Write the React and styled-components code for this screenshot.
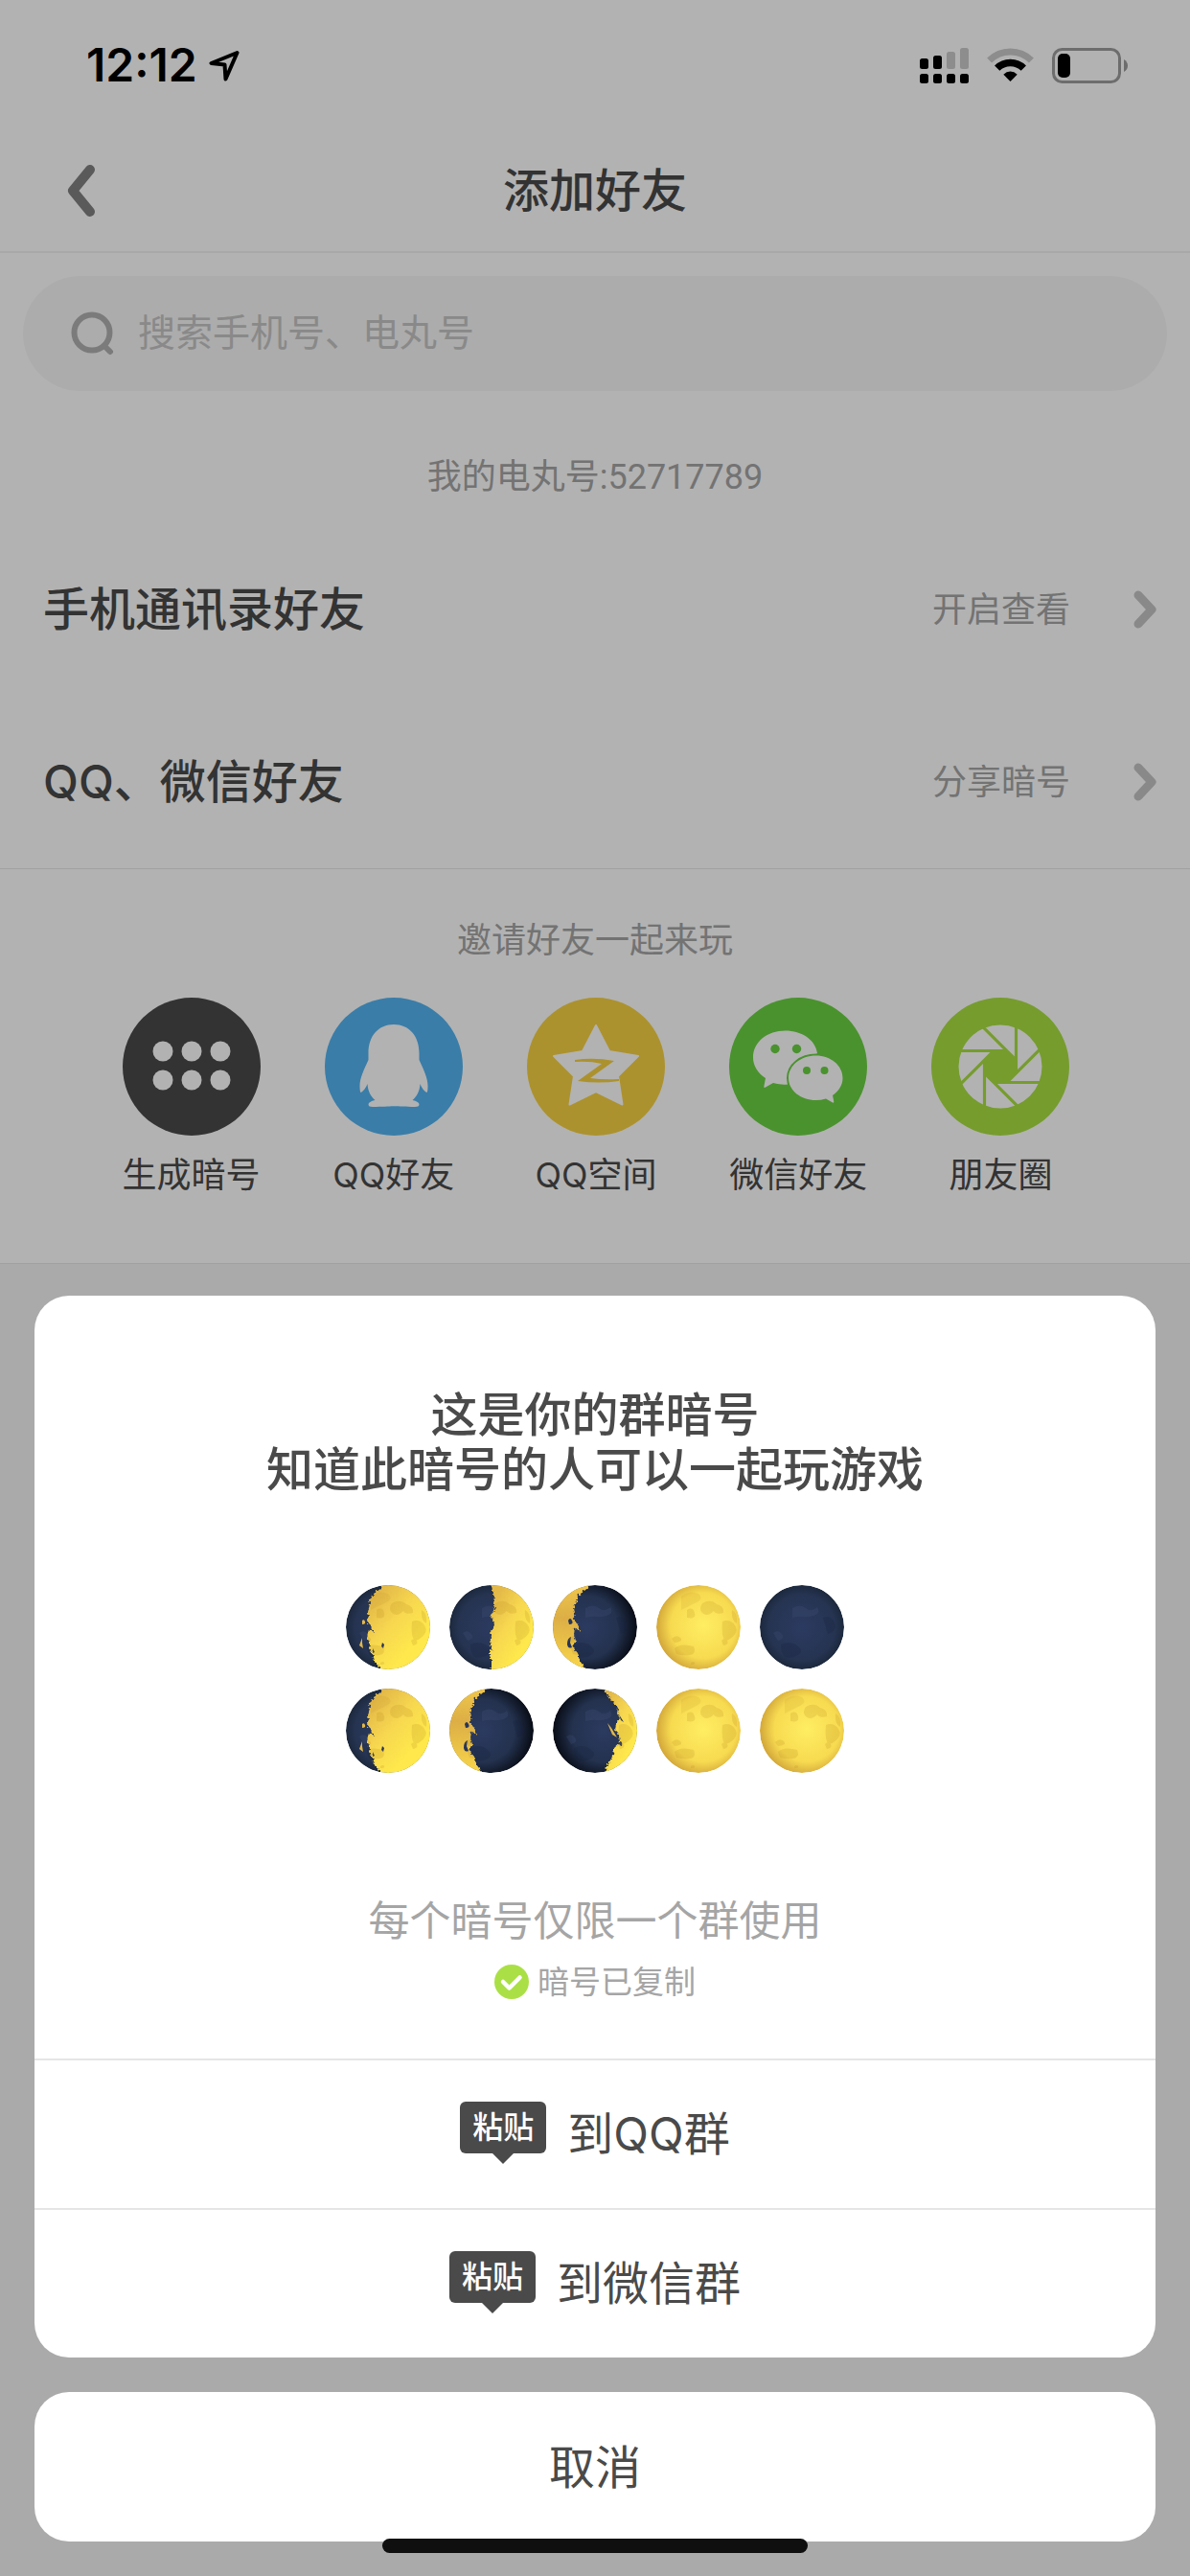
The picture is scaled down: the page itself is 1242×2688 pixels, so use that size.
import React from "react";
import styled, { createGlobalStyle } from "styled-components";

const color = {
  ink: "#4a4a4a",
  muted: "#a5a5a5",
  faint: "#c5c5c5",
  line: "#e5e5e5",
};

const GlobalStyle = createGlobalStyle`
  *, *::before, *::after { box-sizing: border-box; }
  body {
    margin: 0;
    background: #f4f4f4;
    color: ${color.ink};
    font-family: Inter, "Noto Sans CJK SC", sans-serif;
    font-size: 36px;
    line-height: 48px;
  }
  button, input { font: inherit; color: inherit; }
  button { border: 0; padding: 0; background: none; cursor: pointer; }
  h1, h2, p, ul { margin: 0; padding: 0; font-weight: 400; }
  ul { list-style: none; }
  svg { display: block; flex: none; }
`;

const Page = styled.div`
  position: relative;
  min-height: 100vh;
`;

const Screen = styled.main`
  background: #fff;
  border-bottom: 1px solid ${color.line};
`;

const StatusBar = styled.div`
  display: flex;
  align-items: center;
  justify-content: space-between;
  height: 136px;
  padding: 0 65px 0 90px;
  color: #000;
`;

const StatusGroup = styled.div`
  display: flex;
  align-items: center;
  gap: ${(p) => p.$gap}px;
`;

const Clock = styled.time`
  font-size: 48px;
  font-weight: 600;
`;

const NavBar = styled.header`
  display: grid;
  grid-template-columns: 1fr auto 1fr;
  align-items: center;
  height: 128px;
  padding: 0 70px;
  border-bottom: 2px solid #f1f1f1;
`;

const BackButton = styled.button`
  justify-self: start;
`;

const Title = styled.h1`
  font-size: 48px;
  font-weight: 500;
`;

const SearchForm = styled.form`
  padding: 24px;
`;

const SearchBox = styled.label`
  display: flex;
  align-items: center;
  gap: 24px;
  height: 120px;
  padding: 0 50px;
  border-radius: 60px;
  background: #f7f7f7;
`;

const SearchInput = styled.input`
  flex: 1;
  min-width: 0;
  padding: 0 0 2px;
  border: 0;
  outline: 0;
  background: none;
  font-size: 39px;
  &::placeholder { color: ${color.faint}; opacity: 1; }
`;

const MyId = styled.p`
  padding: 42px 0 24px;
  color: ${color.muted};
  font-family: Roboto, "Noto Sans CJK SC", sans-serif;
  text-align: center;
`;

const FriendRow = styled.button`
  display: flex;
  align-items: center;
  width: 100%;
  height: 180px;
  padding: 0 33px 0 45px;
  text-align: left;
`;

const RowTitle = styled.span`
  flex: 1;
  font-size: 48px;
  font-weight: 500;
`;

const RowAction = styled.span`
  margin-right: 66px;
  color: ${color.muted};
`;

const Invite = styled.section`
  padding: 50px 0 68px;
  border-top: 1px solid ${color.line};
`;

const InviteTitle = styled.h2`
  margin-bottom: 36px;
  color: ${color.muted};
  font-size: 36px;
  text-align: center;
`;

const ShareGrid = styled.ul`
  display: grid;
  grid-template-columns: repeat(5, 1fr);
  padding: 0 92px 0 94px;
`;

const ShareButton = styled.button`
  display: flex;
  flex-direction: column;
  align-items: center;
  gap: 17px;
  width: 100%;
`;

const Backdrop = styled.div`
  position: absolute;
  inset: 0;
  background: rgba(0, 0, 0, 0.3);
`;

const Sheet = styled.div`
  position: absolute;
  left: 0;
  right: 0;
  bottom: 0;
  display: flex;
  flex-direction: column;
  gap: 36px;
  padding: 36px;
`;

const Card = styled.section`
  overflow: hidden;
  border-radius: 36px;
  background: #fff;
`;

const CardBody = styled.div`
  display: flex;
  flex-direction: column;
  align-items: center;
  padding: 96px 36px 56px;
`;

const CardTitle = styled.h2`
  font-size: 49px;
  font-weight: 500;
  line-height: 57px;
  text-align: center;
`;

const CodeGrid = styled.ul`
  display: grid;
  grid-template-columns: repeat(5, 88px);
  gap: 20px;
  margin: 92px 0 130px;
`;

const Hint = styled.p`
  color: ${color.muted};
  font-size: 43px;
`;

const Copied = styled.p`
  display: flex;
  align-items: center;
  gap: 9px;
  margin-top: 16px;
  color: ${color.muted};
  font-size: 33px;
`;

const SheetButton = styled.button`
  display: flex;
  align-items: center;
  justify-content: center;
  gap: 22px;
  width: 100%;
  height: 156px;
  border-top: 2px solid ${(p) => (p.$plain ? "transparent" : color.line)};
  font-size: 48px;
`;

const PasteTag = styled.span`
  position: relative;
  width: 90px;
  margin-bottom: 14px;
  border-radius: 6px;
  background: ${color.ink};
  color: #fff;
  font-size: 32px;
  font-weight: 500;
  line-height: 54px;
  text-align: center;
  &::after {
    content: "";
    position: absolute;
    top: 100%;
    left: 50%;
    margin-left: -11px;
    border: 11px solid transparent;
    border-top-color: ${color.ink};
    border-bottom: 0;
  }
`;

const HomeIndicator = styled.div`
  position: absolute;
  bottom: 24px;
  left: 50%;
  width: 444px;
  height: 15px;
  margin-left: -222px;
  border-radius: 8px;
  background: #0f0f0f;
`;

const HiddenDefs = styled.div`
  height: 0;
  overflow: hidden;
`;

const LocationIcon = () => (
  <svg width="32" height="33" viewBox="0 0 32 33" fill="none" stroke="#000" strokeWidth="4" strokeLinejoin="round" aria-hidden="true">
    <path d="M29.5 3 2.5 14 16.5 15.5 17.5 30.5Z" />
  </svg>
);

const SignalIcon = () => (
  <svg width="51" height="37" viewBox="0 0 51 37" aria-hidden="true">
    <rect x="0" y="11" width="9" height="11" rx="2.5" />
    <rect x="14" y="8" width="9" height="14" rx="2.5" />
    <rect x="28" y="4" width="9" height="18" rx="2.5" fill="#cbcbcb" />
    <rect x="42" y="0" width="9" height="22" rx="2.5" fill="#cbcbcb" />
    {[0, 14, 28, 42].map((x) => (
      <rect key={x} x={x} y="27" width="9" height="10" rx="2.5" />
    ))}
  </svg>
);

const WifiIcon = () => (
  <svg width="49" height="36" viewBox="0 0 49 36" fill="none" aria-hidden="true">
    <path d="M2.6 13.1a31 31 0 0 1 43.8 0" stroke="#cbcbcb" strokeWidth="7" />
    <path d="M10.7 21.2a19.5 19.5 0 0 1 27.6 0" stroke="#000" strokeWidth="7.5" />
    <path d="M24.5 35 17.3 27.8Q20.5 24.5 24.5 24.5T31.7 27.8Z" fill="#000" />
  </svg>
);

const BatteryIcon = () => (
  <svg width="79" height="37" viewBox="0 0 79 37" aria-hidden="true">
    <rect x="1.5" y="1.5" width="69" height="34" rx="9" fill="none" stroke="#9c9c9c" strokeWidth="3" />
    <rect x="6" y="6" width="13" height="25" rx="5" />
    <path d="M75 12q4 2.500 4 6.500t-4 6.500Z" fill="#9c9c9c" />
  </svg>
);

const BackIcon = () => (
  <svg width="30" height="56" viewBox="0 0 30 56" fill="none" stroke="#818181" strokeWidth="10" strokeLinecap="round" strokeLinejoin="round" aria-hidden="true">
    <path d="M24 6 6 28 24 50" />
  </svg>
);

const ForwardIcon = () => (
  <svg width="26" height="40" viewBox="0 0 26 40" fill="none" stroke={color.faint} strokeWidth="9" strokeLinecap="round" strokeLinejoin="round" aria-hidden="true">
    <path d="M5 5 19 20 5 35" />
  </svg>
);

const SearchIcon = () => (
  <svg width="46" height="46" viewBox="0 0 46 46" fill="none" stroke="#b1b1b1" strokeWidth="6" aria-hidden="true">
    <circle cx="22" cy="22" r="18.5" />
    <path d="M35 36 41 42" strokeLinecap="round" />
  </svg>
);

const CheckIcon = () => (
  <svg width="36" height="36" viewBox="0 0 36 36" fill="none" aria-hidden="true">
    <circle cx="18" cy="18" r="18" fill="#aae045" />
    <path d="M9 18 15.5 24.5 26.5 13.5" stroke="#fff" strokeWidth="4.5" strokeLinecap="round" strokeLinejoin="round" />
  </svg>
);

const CodeGlyph = () => (
  <g fill="#fff">
    {[56, 86].map((y) => [42, 72, 102].map((x) => <circle key={x + "-" + y} cx={x} cy={y} r="10.5" />))}
  </g>
);

const QQGlyph = () => (
  <path
    fill="#fff"
    d="M72 28C56 28 45.500 40 45.500 58V65C41 75 36.500 84 36.500 92Q36.500 98 37.500 99C40 98 43 94 44.500 90C45 98 48 103 52.500 107C48 108 45.500 109.500 45.500 111.500Q45.500 114 50 114C60 114 66 113.500 72 113.300C78 113.500 84 114 94 114Q98.500 114 98.500 111.500C98.500 109.500 96 108 91.500 107C96 103 99 98 99.500 90C101 94 104 98 106.500 99Q107.500 98 107.500 92C107.500 84 103 75 98.500 65V58C98.500 40 88 28 72 28Z"
  />
);

const QzoneGlyph = () => (
  <g>
    <path
      d="M72 29 86 56 116 61 95 82 99.500 111.500 72 98 44.500 111.500 49 82 28 61 58 56Z"
      fill="#fff"
      stroke="#fff"
      strokeWidth="2"
      strokeLinejoin="round"
    />
    <path d="M50 65Q70 62 91 66L66 84Q80 86 96 85V87Q75 90 53 87L78 69Q66 66 50 67Z" fill="#f7d143" />
  </g>
);

const WechatGlyph = () => (
  <g fill="#fff">
    <path d="M58.500 34.500C40 34.500 25 46 25 62.500C25 71 30 79 38 84L36.300 93Q36.500 94.500 38 93.500L46 89C52 90.500 56 91 61 90.500L92 58C90 44 76 34.500 58.500 34.500Z" />
    <path
      d="M90.500 60.500C75 60.500 62 70.500 62 84C62 97 75 107 90.500 107Q96 107 101 105.500L108 109.500Q109.500 110 109.300 108.500L108 102C114.500 97.500 118.500 91 118.500 84C118.500 70.500 106 60.500 90.500 60.500Z"
      stroke="#6bd143"
      strokeWidth="4"
      paintOrder="stroke"
    />
    <g fill="#6bd143">
      <circle cx="48" cy="53.5" r="4.7" />
      <circle cx="70.5" cy="53.5" r="4.7" />
      <circle cx="81" cy="76" r="4" />
      <circle cx="99.5" cy="76" r="4" />
    </g>
  </g>
);

const MomentsGlyph = () => (
  <g>
    <circle cx="72" cy="72" r="43.5" fill="#fff" />
    <path d="M65 55H79L89 65V79L79 89H65L55 79V65Z" fill="#aae043" />
    {[0, 45, 90, 135, 180, 225, 270, 315].map((a) => (
      <path key={a} d="M88.500 27V78" stroke="#aae043" strokeWidth="3.2" transform={`rotate(${a} 72 72)`} />
    ))}
  </g>
);

const ShareIcon = ({ fill, children }) => (
  <svg width="144" height="144" viewBox="0 0 144 144" aria-hidden="true">
    <circle cx="72" cy="72" r="72" fill={fill} />
    {children}
  </svg>
);

// Terminator outlines; each closes round the lit side of the disc.
const litShape = {
  gibbous: "M41 -2 36 4 29 9 24 16 25 20 23 28 24 33 22 38 25 42 30 50 24 46 22 55 25 62 24 66 28 72 30 79 38 90H92V-4Z",
  quarter: "M43 -2 45 6 47 12 46 20 48 26 43 31 45 36 47 42 43 48 44 55 42 60 44 66 42 72 44 79 43 92H92V-4Z",
  waning: "M42 -2 33 6 26 11 25 17 22 23 23 29 21 35 25 40 29 49 23 44 22 52 24 58 21 65 26 71 28 79 38 92H-4V-4Z",
  waxing: "M51 -2 58 8 63 15 68 20 67 26 70 31 66 36 65 43 69 49 70 57 64 62 63 70 58 78 52 92H92V-4Z",
};

const nightFill = { waning: "url(#nightRight)", waxing: "url(#nightLeft)", full: "url(#day)" };

const Moon = ({ phase }) => {
  const shape = litShape[phase];
  return (
    <svg width="88" height="88" viewBox="0 0 88 88" aria-hidden="true">
      <g clipPath="url(#disc)">
        <circle cx="44" cy="44" r="44" fill={nightFill[phase] || "url(#night)"} />
        {phase !== "full" && (
          <g fill="#46557d" opacity="0.25">
            <path d="M34 24q8-5 14 0t12-1q4 7-4 9t-10 1-12 1ZM14 50q5-4 9 1t-4 7Z" />
            <path d="M22 62q10-5 18 2t-5 11-13-13ZM66 34q8-3 12 5t-7 12Z" fill="#17213c" />
          </g>
        )}
        {shape && (
          <path d={shape} fill={phase === "waning" ? "url(#dayLeft)" : "url(#dayRight)"} filter="url(#rough)" />
        )}
        {phase === "gibbous" && (
          <>
            <path d="M17 37q2-2 3 1t-3 3ZM17 55l-3 8 4 3-1-6Z" fill="#e3b84a" />
            <path d="M38 60l2 2-1 4-2-2ZM28 66l2 4-2 1Z" fill="#27355a" />
          </>
        )}
        {phase === "waning" && (
          <path d="M16 37q2-4 4 0t-3 4ZM15 62q0-7 4-8l-1 6 2 5q-4 2-5-3Z" fill="#27355a" />
        )}
        {phase === "waxing" && (
          <>
            <path d="M57 36 61 41 67 51 62 48Z" fill="#e3b84a" />
            <path d="M69 27 74 35 71 33ZM70 55q3 0 2 5-3 0-2-5Z" fill="#27355a" />
          </>
        )}
        {phase !== "new" && (
          <g fill="#b98a24" opacity="0.2" clipPath={shape ? `url(#lit-${phase})` : undefined}>
            <g filter="url(#soft)">
              <path d="M48 19q9-5 15 1 8 2 7 9-8 2-10-2-7 7-12 2-4-4 0-10ZM69 38q8-3 13 4t-5 14-8-18ZM32 26q6-4 8 3t-8 5Z" />
              <path d="M79 26q6 3 5 14-6-3-5-14ZM19 66q6-6 20-2 3 8-4 9t-14-1ZM68 58q4-4 6 0t-4 5ZM16 56q5-5 9-1t-6 5Z" />
              <path d="M26 12q9-7 18-3 6 5-2 9t-16 8Z" opacity="0.6" />
              <path d="M36 81q3-2 4 0t-4 2Z" />
            </g>
          </g>
        )}
      </g>
    </svg>
  );
};

const MoonDefs = () => (
  <svg width="0" height="0" aria-hidden="true">
    <defs>
      <clipPath id="disc"><circle cx="44" cy="44" r="44" /></clipPath>
      {Object.entries(litShape).map(([name, d]) => (
        <clipPath key={name} id={`lit-${name}`}><path d={d} /></clipPath>
      ))}
      <filter id="rough" x="-10%" y="-10%" width="120%" height="120%">
        <feTurbulence type="fractalNoise" baseFrequency="0.4" numOctaves="2" seed="4" />
        <feDisplacementMap in="SourceGraphic" scale="5" xChannelSelector="R" yChannelSelector="G" />
      </filter>
      <filter id="soft">
        <feGaussianBlur stdDeviation="0.7" />
      </filter>
      <radialGradient id="day" cx="0.56" cy="0.48" r="0.6">
        <stop offset="0" stopColor="#ffee62" />
        <stop offset="0.65" stopColor="#f7da50" />
        <stop offset="1" stopColor="#c99a34" />
      </radialGradient>
      <linearGradient id="dayRight" x1="0.2" y1="0.1" x2="0.7" y2="0.7">
        <stop offset="0" stopColor="#e3b948" />
        <stop offset="0.5" stopColor="#f7d750" />
        <stop offset="1" stopColor="#fee84c" />
      </linearGradient>
      <linearGradient id="dayLeft" x1="0" y1="0" x2="0" y2="1">
        <stop offset="0" stopColor="#f2c94c" />
        <stop offset="0.4" stopColor="#dcae45" />
        <stop offset="1" stopColor="#fbd94a" />
      </linearGradient>
      <radialGradient id="night" cx="0.5" cy="0.5" r="0.52">
        <stop offset="0" stopColor="#2b3a60" />
        <stop offset="0.75" stopColor="#263452" />
        <stop offset="1" stopColor="#1a2638" />
      </radialGradient>
      <radialGradient id="nightRight" cx="0.4" cy="0.5" r="0.62">
        <stop offset="0" stopColor="#2b3a60" />
        <stop offset="0.6" stopColor="#24324f" />
        <stop offset="1" stopColor="#05080f" />
      </radialGradient>
      <radialGradient id="nightLeft" cx="0.6" cy="0.5" r="0.62">
        <stop offset="0" stopColor="#2b3a60" />
        <stop offset="0.6" stopColor="#24324f" />
        <stop offset="1" stopColor="#05080f" />
      </radialGradient>
    </defs>
  </svg>
);

const friendRows = [
  { title: "手机通讯录好友", action: "开启查看" },
  { title: "QQ、微信好友", action: "分享暗号" },
];

const shareTargets = [
  { label: "生成暗号", fill: "#4a4a4a", Glyph: CodeGlyph },
  { label: "QQ好友", fill: "#53b4f1", Glyph: QQGlyph },
  { label: "QQ空间", fill: "#f7d143", Glyph: QzoneGlyph },
  { label: "微信好友", fill: "#6bd143", Glyph: WechatGlyph },
  { label: "朋友圈", fill: "#aae043", Glyph: MomentsGlyph },
];

const secretCode = [
  "gibbous", "quarter", "waning", "full", "new",
  "gibbous", "waning", "waxing", "full", "full",
];

export default function App() {
  return (
    <Page>
      <GlobalStyle />
      <HiddenDefs><MoonDefs /></HiddenDefs>
      <Screen>
        <StatusBar>
          <StatusGroup $gap={12}>
            <Clock>12:12</Clock>
            <LocationIcon />
          </StatusGroup>
          <StatusGroup $gap={19}>
            <SignalIcon />
            <WifiIcon />
            <BatteryIcon />
          </StatusGroup>
        </StatusBar>
        <NavBar>
          <BackButton type="button" aria-label="返回"><BackIcon /></BackButton>
          <Title>添加好友</Title>
        </NavBar>
        <SearchForm>
          <SearchBox>
            <SearchIcon />
            <SearchInput type="text" placeholder="搜索手机号、电丸号" aria-label="搜索手机号、电丸号" />
          </SearchBox>
        </SearchForm>
        <MyId>我的电丸号:52717789</MyId>
        {friendRows.map((row) => (
          <FriendRow key={row.title} type="button">
            <RowTitle>{row.title}</RowTitle>
            <RowAction>{row.action}</RowAction>
            <ForwardIcon />
          </FriendRow>
        ))}
        <Invite>
          <InviteTitle>邀请好友一起来玩</InviteTitle>
          <ShareGrid>
            {shareTargets.map(({ label, fill, Glyph }) => (
              <li key={label}>
                <ShareButton type="button">
                  <ShareIcon fill={fill}><Glyph /></ShareIcon>
                  <span>{label}</span>
                </ShareButton>
              </li>
            ))}
          </ShareGrid>
        </Invite>
      </Screen>
      <Backdrop />
      <Sheet role="dialog" aria-labelledby="code-title">
        <Card>
          <CardBody>
            <CardTitle id="code-title">
              这是你的群暗号<br />知道此暗号的人可以一起玩游戏
            </CardTitle>
            <CodeGrid>
              {secretCode.map((phase, i) => (
                <li key={i}><Moon phase={phase} /></li>
              ))}
            </CodeGrid>
            <Hint>每个暗号仅限一个群使用</Hint>
            <Copied><CheckIcon />暗号已复制</Copied>
          </CardBody>
          <SheetButton type="button"><PasteTag>粘贴</PasteTag>到QQ群</SheetButton>
          <SheetButton type="button"><PasteTag>粘贴</PasteTag>到微信群</SheetButton>
        </Card>
        <Card>
          <SheetButton type="button" $plain>取消</SheetButton>
        </Card>
      </Sheet>
      <HomeIndicator />
    </Page>
  );
}
